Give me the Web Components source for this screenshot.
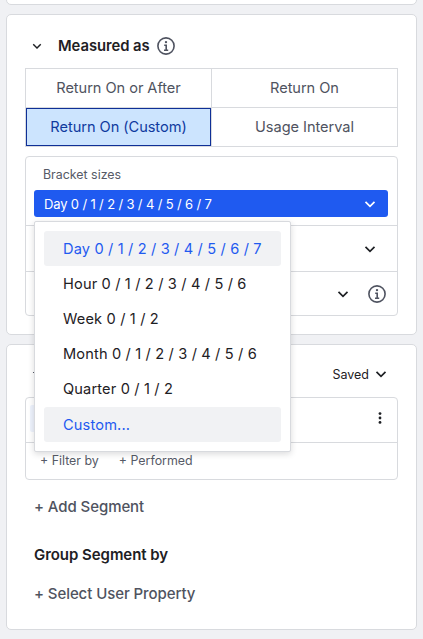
<!DOCTYPE html>
<html>
<head>
<meta charset="utf-8">
<style>
  html, body { margin: 0; height: 639px; overflow: hidden; background: #f0f1f4; }
  body { font-family: "Inter", "Liberation Sans", sans-serif; color: #1e2024; font-size: 14px; }
</style>
</head>
<body>
<sidebar-page></sidebar-page>

<script>
const CHEVRON = `<svg viewBox="0 0 12 12" width="12" height="12" fill="none" stroke="currentColor" stroke-width="1.7"><path d="M1.5 3.8L6 8.3l4.5-4.5"/></svg>`;
const INFO = `<svg viewBox="0 0 20 20" width="20" height="20" fill="none" stroke="#4f5360" stroke-width="1.6"><circle cx="10" cy="10" r="8.1"/><path d="M8.2 9.2h2v4.8M8 14.2h4.2"/><circle cx="10" cy="6.1" r="1.2" fill="#4f5360" stroke="none"/></svg>`;

class PanelCard extends HTMLElement {
  constructor() {
    super();
    this.attachShadow({ mode: "open" });
    this.shadowRoot.innerHTML = `
      <style>
        :host { display: block; box-sizing: border-box; margin: 0 6px; background: #fff; border: 1px solid #d8dade; border-radius: 5px; }
      </style>
      <slot></slot>`;
  }
}
customElements.define("panel-card", PanelCard);

class MeasureGrid extends HTMLElement {
  constructor() {
    super();
    this.attachShadow({ mode: "open" });
    const labels = ["Return On or After", "Return On", "Return On (Custom)", "Usage Interval"];
    const active = Number(this.getAttribute("active") || 2);
    this.shadowRoot.innerHTML = `
      <style>
        :host { display: grid; grid-template-columns: 186px 186px; grid-auto-rows: 39px; box-sizing: border-box; width: 373px; height: 79px; border-top: 1px solid #d8dade; border-left: 1px solid #d8dade; }
        div { display: flex; align-items: center; justify-content: center; box-sizing: border-box; padding-bottom: 1px; border-right: 1px solid #d8dade; border-bottom: 1px solid #d8dade; color: #4f5360; font-size: 14.6px; letter-spacing: -.05px; }
        .on { background: #cce4fe; background-clip: padding-box; color: #103a9e; box-shadow: inset 0 0 0 1px #0f2f96; }
      </style>
      ${labels.map((l, i) => `<div class="${i === active ? "on" : ""}">${l}</div>`).join("")}`;
  }
}
customElements.define("measure-grid", MeasureGrid);

class BracketMenu extends HTMLElement {
  constructor() {
    super();
    this.attachShadow({ mode: "open" });
    const items = ["Day 0 / 1 / 2 / 3 / 4 / 5 / 6 / 7", "Hour 0 / 1 / 2 / 3 / 4 / 5 / 6", "Week 0 / 1 / 2", "Month 0 / 1 / 2 / 3 / 4 / 5 / 6", "Quarter 0 / 1 / 2", "Custom..."];
    this.shadowRoot.innerHTML = `
      <style>
        :host { display: flex; flex-direction: column; box-sizing: border-box; position: absolute; left: 34px; top: 221px; width: 257px; height: 231px; padding: 9px; background: #fff; border: 1px solid #d8dade; border-radius: 2px; box-shadow: 0 2px 6px rgba(30,32,36,.16); }
        div { height: 35.2px; flex: none; display: flex; align-items: center; padding-left: 19px; border-radius: 3px; font-size: 14.6px; letter-spacing: .15px; color: #1e2024; }
        .sel { color: #1f5af0; background: #f1f2f4; }
      </style>
      ${items.map((t, i) => `<div class="${i === 0 || i === 5 ? "sel" : ""}">${t}</div>`).join("")}`;
  }
}
customElements.define("bracket-menu", BracketMenu);

class BracketPanel extends HTMLElement {
  constructor() {
    super();
    this.attachShadow({ mode: "open" });
    this.shadowRoot.innerHTML = `
      <style>
        :host { display: block; box-sizing: border-box; width: 373px; height: 160px; border: 1px solid #d8dade; border-radius: 4px; color: #1e2024; }
        .top { box-sizing: border-box; height: 69px; padding: 10px 9px 0 8px; border-bottom: 1px solid #d8dade; }
        .label { padding-left: 9px; font-size: 12.4px; line-height: 16px; color: #565a66; }
        .select { display: flex; align-items: center; justify-content: space-between; box-sizing: border-box; height: 27px; margin-top: 7px; padding: 0 12px 0 10px; background: #1f5af0; border-radius: 3px; color: #fff; font-size: 13px; letter-spacing: -.15px; }
        .row { box-sizing: border-box; display: flex; align-items: center; justify-content: flex-end; height: 45px; padding-right: 21px; }
        .row + .row { height: 45px; border-top: 1px solid #d8dade; padding-right: 10px; gap: 18px; }
        svg { display: block; }
      </style>
      <div class="top">
        <div class="label">Bracket sizes</div>
        <div class="select"><span>Day 0 / 1 / 2 / 3 / 4 / 5 / 6 / 7</span>${CHEVRON}</div>
      </div>
      <div class="row">${CHEVRON}</div>
      <div class="row">${CHEVRON}${INFO}</div>`;
  }
}
customElements.define("bracket-panel", BracketPanel);

class SegmentBox extends HTMLElement {
  constructor() {
    super();
    this.attachShadow({ mode: "open" });
    this.shadowRoot.innerHTML = `
      <style>
        :host { display: block; box-sizing: border-box; width: 373px; height: 83px; border: 1px solid #d8dade; border-radius: 4px; }
        .top { display: flex; align-items: center; justify-content: space-between; box-sizing: border-box; height: 45px; padding: 4px 15px 4px 4px; border-bottom: 1px solid #d8dade; }
        .event { width: 100px; height: 27px; background: #eef3fd; border-radius: 2px; margin-top: -4px; }
        .filters { display: flex; gap: 20px; padding: 10px 14px 0; font-size: 12.4px; line-height: 16px; color: #565a66; }
        svg { display: block; margin-top: -4px; }
      </style>
      <div class="top">
        <div class="event"></div>
        <svg viewBox="0 0 4 12" width="4" height="12" fill="#1e2024"><circle cx="2" cy="1.6" r="1.4"/><circle cx="2" cy="6" r="1.4"/><circle cx="2" cy="10.4" r="1.4"/></svg>
      </div>
      <div class="filters"><span>+ Filter by</span><span>+ Performed</span></div>`;
  }
}
customElements.define("segment-box", SegmentBox);

class SidebarPage extends HTMLElement {
  constructor() {
    super();
    this.attachShadow({ mode: "open" });
    this.shadowRoot.innerHTML = `
      <style>
        :host { display: flex; flex-direction: column; position: relative; height: 639px; }
        panel-card.stub { height: 15px; margin-top: -10px; flex: none; }
        panel-card.measure { height: 321px; margin-top: 9px; flex: none; }
        panel-card.segments { height: 286px; margin-top: 9px; flex: none; }
        .inner { display: flex; flex-direction: column; padding-left: 18px; }
        .head { display: flex; align-items: center; height: 22px; margin-top: 20px; margin-bottom: 11px; font-size: 14.8px; font-weight: 600; letter-spacing: -.05px; }
        .head .chev { width: 10px; height: 10px; margin: 0 16px 0 7px; }
        .head .chev svg { width: 10px; height: 10px; display: block; }
        .head .txt { margin-right: 6px; }
        .head svg.info { display: block; }
        bracket-panel { margin-top: 9px; }
        .saved { display: flex; align-items: center; justify-content: flex-end; gap: 6px; box-sizing: border-box; width: 362px; height: 52px; padding-top: 6px; font-size: 12.5px; color: #1e2024; }
        .dot { position: absolute; left: 33px; top: 372px; width: 2px; height: 1px; background: #565a66; }
        .link { padding-left: 9px; font-size: 15px; font-weight: 500; color: #4f5360; letter-spacing: -.08px; line-height: 20px; }
        .add { margin-top: 17px; }
        .group { margin-top: 28px; padding-left: 9px; font-size: 15px; font-weight: 600; line-height: 20px; color: #1e2024; letter-spacing: -.05px; }
        .prop { margin-top: 19px; }
      </style>
      <panel-card class="stub"></panel-card>
      <panel-card class="measure">
        <div class="inner">
          <div class="head">
            <span class="chev">${CHEVRON}</span>
            <span class="txt">Measured as</span>
            ${INFO.replace("<svg", '<svg class="info"')}
          </div>
          <measure-grid active="2"></measure-grid>
          <bracket-panel></bracket-panel>
        </div>
      </panel-card>
      <panel-card class="segments">
        <div class="inner">
          <div class="saved"><span>Saved</span>${CHEVRON}</div>
          <segment-box></segment-box>
          <div class="link add">+ Add Segment</div>
          <div class="group">Group Segment by</div>
          <div class="link prop">+ Select User Property</div>
        </div>
      </panel-card>
      <div class="dot"></div>
      <bracket-menu></bracket-menu>`;
  }
}
customElements.define("sidebar-page", SidebarPage);
</script>
</body>
</html>
